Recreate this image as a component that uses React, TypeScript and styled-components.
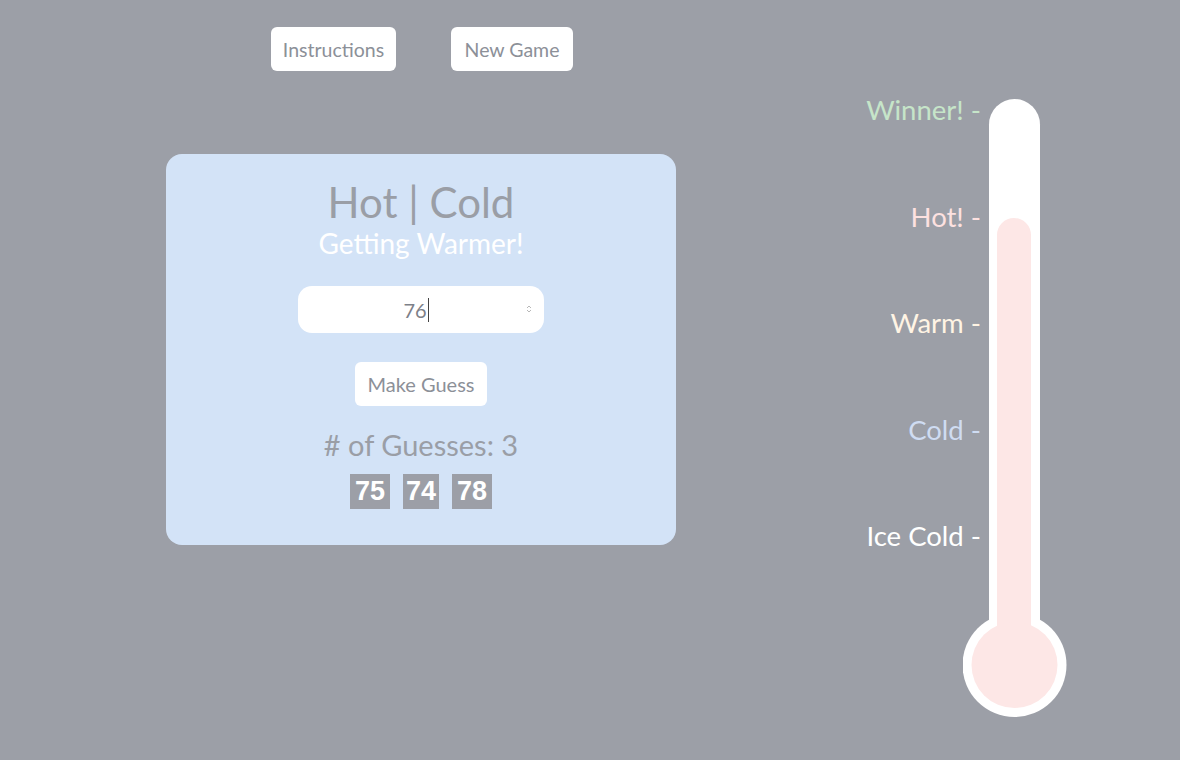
import React from "react";
import styled, { createGlobalStyle } from "styled-components";

const Global = createGlobalStyle`
  html, body { margin: 0; padding: 0; background: #9c9fa7; }
  body { font-family: Lato, "Open Sans", sans-serif; width: 1180px; height: 760px; overflow: hidden; }
`;

const Page = styled.div`
  display: flex;
  width: 1180px;
  height: 760px;
`;

const LeftCol = styled.div`
  width: 842px;
  display: flex;
  flex-direction: column;
  align-items: center;
  padding-top: 27px;
`;

const TopBar = styled.div`
  display: flex;
  gap: 55px;
  margin-left: 2px;
`;

const WhiteButton = styled.button<{ $w: number }>`
  width: ${(p) => p.$w}px;
  height: 44px;
  border: none;
  border-radius: 6px;
  background: #ffffff;
  color: #8c9098;
  font-family: Lato, sans-serif;
  font-size: 19.5px;
  padding: 0;
  cursor: pointer;
`;

const Card = styled.div`
  margin-top: 83px;
  width: 510px;
  height: 391px;
  box-sizing: border-box;
  border-radius: 16px;
  background: #d3e3f7;
  display: flex;
  flex-direction: column;
  align-items: center;
  padding-top: 22px;
`;

const Title = styled.h1`
  margin: 0;
  font-weight: 400;
  font-size: 42px;
  line-height: 52px;
  color: #9a9ea6;
`;

const Status = styled.h2`
  margin: -2px 0 0;
  font-weight: 400;
  font-size: 28px;
  line-height: 34px;
  color: #ffffff;
`;

const InputWrap = styled.div`
  margin-top: 26px;
  width: 246px;
  height: 47px;
  border-radius: 14px;
  background: #ffffff;
  position: relative;
  display: flex;
  align-items: center;
  justify-content: center;
`;

const InputText = styled.span`
  font-size: 20px;
  color: #7d8088;
  margin-left: -10px;
  border-right: 1px solid #444;
  line-height: 24px;
  padding-right: 1px;
`;

const Spinner = styled.svg`
  position: absolute;
  right: 12px;
  top: 18px;
`;

const GuessButton = styled(WhiteButton)`
  margin-top: 29px;
  font-size: 20px;
`;

const Count = styled.div`
  margin-top: 22px;
  font-size: 29px;
  line-height: 34px;
  color: #9a9ea6;
`;

const GuessList = styled.div`
  margin-top: 12px;
  display: flex;
  gap: 13px;
`;

const GuessBox = styled.div<{ $w: number }>`
  width: ${(p) => p.$w}px;
  height: 35px;
  background: #9c9fa7;
  color: #ffffff;
  font-family: "Liberation Sans", Arial, sans-serif;
  font-weight: 700;
  font-size: 27px;
  display: flex;
  align-items: center;
  justify-content: center;
`;

const RightCol = styled.div`
  flex: 1;
  display: flex;
  padding-top: 99px;
`;

const Labels = styled.div`
  width: 139px;
  display: flex;
  flex-direction: column;
  align-items: flex-end;
  gap: 74.5px;
  margin-top: -5px;
`;

const Label = styled.div<{ $c: string }>`
  color: ${(p) => p.$c};
  font-size: 27.5px;
  line-height: 32px;
  white-space: nowrap;
`;

const Thermo = styled.svg`
  margin-left: -18px;
`;

const labels = [
  { t: "Winner! -", c: "#c6e5c9" },
  { t: "Hot! -", c: "#fde1e0" },
  { t: "Warm -", c: "#fff4e4" },
  { t: "Cold -", c: "#cfdcf2" },
  { t: "Ice Cold -", c: "#ffffff" },
];

export default function App() {
  return (
    <>
      <Global />
      <Page>
        <LeftCol>
          <TopBar>
            <WhiteButton $w={125}>Instructions</WhiteButton>
            <WhiteButton $w={122}>New Game</WhiteButton>
          </TopBar>
          <Card>
            <Title>Hot | Cold</Title>
            <Status>Getting Warmer!</Status>
            <InputWrap>
              <InputText>76</InputText>
              <Spinner width="6" height="10" viewBox="0 0 6 10">
                <path d="M1 4 L3 2 L5 4" stroke="#b8b8b8" strokeWidth="1" fill="none" />
                <path d="M1 6 L3 8 L5 6" stroke="#b8b8b8" strokeWidth="1" fill="none" />
              </Spinner>
            </InputWrap>
            <GuessButton $w={132}>Make Guess</GuessButton>
            <Count># of Guesses: 3</Count>
            <GuessList>
              <GuessBox $w={40}>75</GuessBox>
              <GuessBox $w={36}>74</GuessBox>
              <GuessBox $w={40}>78</GuessBox>
            </GuessList>
          </Card>
        </LeftCol>
        <RightCol>
          <Labels>
            {labels.map((l) => (
              <Label key={l.t} $c={l.c}>
                {l.t}
              </Label>
            ))}
          </Labels>
          <Thermo width="104" height="620" viewBox="0 0 104 620">
            <rect x="26" y="0" width="51" height="560" rx="25.5" fill="#ffffff" />
            <circle cx="51.5" cy="566" r="52" fill="#ffffff" />
            <rect x="34" y="119" width="34" height="447" rx="17" fill="#fde7e6" />
            <circle cx="51.5" cy="566" r="43" fill="#fde7e6" />
          </Thermo>
        </RightCol>
      </Page>
    </>
  );
}
